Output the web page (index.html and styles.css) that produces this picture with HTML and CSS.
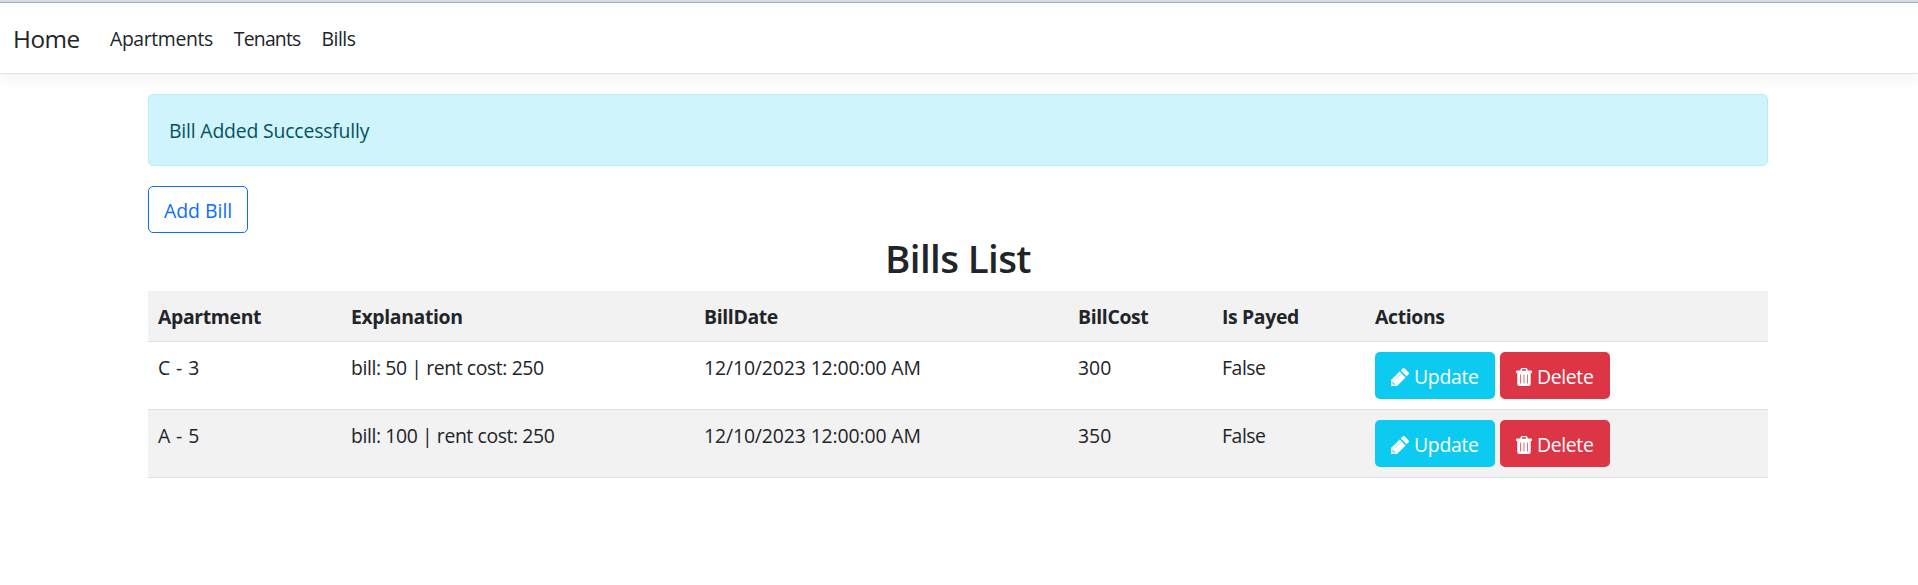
FILE: index.html
```html
<!DOCTYPE html>
<html lang="en">
<head>
<meta charset="utf-8">
<title>Bills List</title>
<link rel="stylesheet" href="styles.css">
</head>
<body>
<svg class="sprite" aria-hidden="true">
  <symbol id="pencil" viewBox="0 0 18 18">
    <path d="M0 18v-6L8.600 3.400l6 6L6 18zM9.700 2.400 11.600.5Q12.700-.4 13.800.6L17.400 4.200Q18.400 5.300 17.500 6.400L15.600 8.300z" fill="currentColor"/>
    <path d="M4.500 11.500 10.500 5.500" fill="none" stroke="#0dcaf0" stroke-width=".7" opacity=".6"/>
    <path d="M1.700 13.800 2.200 15.800 4.200 16.300" fill="none" stroke="#0dcaf0" stroke-width="1"/>
  </symbol>
  <symbol id="trash" viewBox="0 0 16 18">
    <path d="M4.500 2.500V1.500Q4.500 0 6 0h4q1.500 0 1.500 1.500v1H15q1 0 1 1V5H0V3.500q0-1 1-1zM6 2.500h4v-1H6zM1.300 5h13.400v11q0 2-2 2H3.300q-2 0-2-2z" fill="currentColor"/>
    <path d="M6 2h4" stroke="#dc3545" stroke-width="1"/>
    <path d="M4.500 6.500v9M8 6.500v9M11.500 6.500v9" stroke="#dc3545" stroke-width="1" opacity=".7"/>
  </symbol>
</svg>
<div class="strip"></div>
<header class="navbar">
  <a class="brand">Home</a>
  <nav class="nav">
    <a class="nav-apartments">Apartments</a>
    <a class="nav-tenants">Tenants</a>
    <a class="nav-bills">Bills</a>
  </nav>
</header>
<main class="container">
  <div class="alert">Bill Added Successfully</div>
  <a class="btn btn-outline">Add Bill</a>
  <h2 class="title">Bills List</h2>
  <table class="table">
    <colgroup><col class="c1"><col class="c2"><col class="c3"><col class="c4"><col class="c5"><col class="c6"></colgroup>
    <thead>
      <tr class="shade"><th>Apartment</th><th>Explanation</th><th>BillDate</th><th>BillCost</th><th>Is Payed</th><th>Actions</th></tr>
    </thead>
    <tbody>
      <tr>
        <td class="unit">C - 3</td><td class="note">bill: 50 | rent cost: 250</td><td class="date">12/10/2023 12:00:00 AM</td><td>300</td><td class="paid">False</td>
        <td class="cell-actions"><div class="actions"><a class="btn btn-info"><svg class="i-pencil"><use href="#pencil"/></svg>Update</a><a class="btn btn-danger"><svg class="i-trash"><use href="#trash"/></svg>Delete</a></div></td>
      </tr>
      <tr class="shade">
        <td class="unit">A - 5</td><td class="note">bill: 100 | rent cost: 250</td><td class="date">12/10/2023 12:00:00 AM</td><td>350</td><td class="paid">False</td>
        <td class="cell-actions"><div class="actions"><a class="btn btn-info"><svg class="i-pencil"><use href="#pencil"/></svg>Update</a><a class="btn btn-danger"><svg class="i-trash"><use href="#trash"/></svg>Delete</a></div></td>
      </tr>
    </tbody>
  </table>
</main>
</body>
</html>
```
FILE: styles.css
```css
* { box-sizing: border-box; }
body {
  margin: 0;
  background: #fff;
  color: #212529;
  font: 400 19.4px/30px "Open Sans", "Noto Sans", sans-serif;
}
.sprite { display: none; }
.strip { height: 3px; background: #d5dce8; border-bottom: 1px solid #a9b1bd; }
.navbar {
  display: flex;
  align-items: center;
  height: 71px;
  padding: 2px 13px 0;
  border-bottom: 1px solid #dee2e6;
  box-shadow: 0 5px 15px rgba(0, 0, 0, .05);
}
.brand { font-size: 24.300px; width: 97px; letter-spacing: -.5px; }
.nav { display: flex; gap: 21px; }
.nav-apartments { letter-spacing: -.38px; }
.nav-tenants { letter-spacing: -.8px; }
.nav-bills { letter-spacing: -.5px; }
.container { width: 1620px; margin: 20px 0 0 148px; }
.alert {
  padding: 21px 20px 19px;
  border: 1px solid #b6effb;
  border-radius: 5px;
  background: #cff4fc;
  color: #055160;
  margin-bottom: 20px;
  letter-spacing: -.18px;
}
.btn {
  display: flex;
  align-items: center;
  height: 47px;
  padding: 2px 15px 0;
  border: 1px solid transparent;
  border-radius: 5px;
  white-space: nowrap;
}
.btn-outline { width: 100px; border-color: #0d6efd; color: #0d6efd; }
.btn-info { width: 120px; background: #0dcaf0; color: #fff; letter-spacing: -.3px; }
.btn-danger { width: 110px; background: #dc3545; color: #fff; letter-spacing: -.35px; }
.title {
  margin: 0;
  padding: 1px 0 9px;
  font-size: 38.500px;
  line-height: 48px;
  font-weight: 600;
  text-align: center;
  letter-spacing: -.6px;
}
.table { width: 100%; table-layout: fixed; border-collapse: separate; border-spacing: 0; }
.c1 { width: 193px; }
.c2 { width: 353px; }
.c3 { width: 374px; }
.c4 { width: 144px; }
.c5 { width: 153px; }
.table th, .table td {
  padding: 11px 10px 9px;
  text-align: left;
  vertical-align: top;
  border-bottom: 1px solid #dee2e6;
}
.table th { font-weight: 700; letter-spacing: -.35px; }
.table .cell-actions { padding: 10px; }
.unit { letter-spacing: .4px; }
.note { letter-spacing: -.4px; }
.date { letter-spacing: -.12px; }
.paid { letter-spacing: -.45px; }
.shade { background: #f2f2f2; }
.actions { display: flex; gap: 5px; }
.i-pencil { width: 18px; height: 18px; margin-right: 5px; }
.i-trash { width: 16px; height: 18px; margin-right: 5px; }
```
